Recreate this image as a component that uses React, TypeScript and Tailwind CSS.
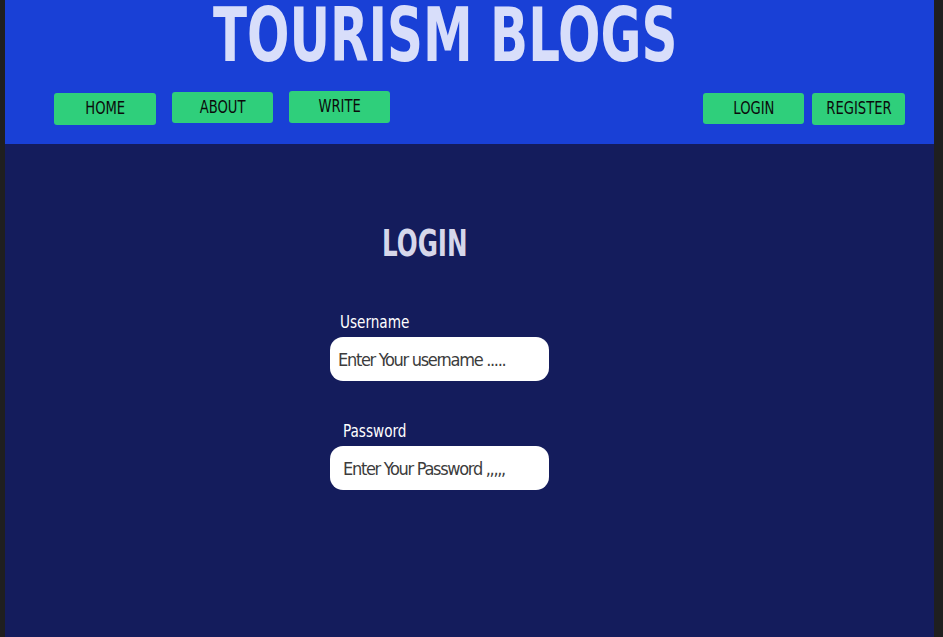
import React from "react";

const font = { fontFamily: '"DejaVu Sans Condensed", "DejaVu Sans", sans-serif' };

function NavButton({ label, size = "h-[32px] w-[101px]", className = "" }: { label: string; size?: string; className?: string }) {
  return (
    <button
      className={
        "flex items-center justify-center rounded-[3px] bg-[#2fcf7b] text-[17px] text-[#0b0b0b] " +
        size +
        " " +
        className
      }
    >
      <span className="inline-block scale-x-[0.86]">{label}</span>
    </button>
  );
}

function Field({ label, placeholder, labelPad, inputPad }: { label: string; placeholder: string; labelPad: string; inputPad: string }) {
  return (
    <div className="flex flex-col">
      <label className={"text-[18px] leading-[24px] text-white " + labelPad}>
        <span className="inline-block origin-left scale-x-[0.84]">{label}</span>
      </label>
      <input
        type="text"
        placeholder={placeholder}
        className={
          "mt-[3px] h-[44px] w-[219px] rounded-[13px] bg-white text-[18px] font-light tracking-[-1.3px] text-black outline-none placeholder:text-[#3c3c3c] " +
          inputPad
        }
      />
    </div>
  );
}

export default function App() {
  return (
    <div className="flex h-[637px] w-[943px] bg-[#1f1f1f] pl-[5px] pr-[9px]" style={font}>
      <div className="flex flex-1 flex-col bg-[#141c5c]">
        {/* Header */}
        <header className="flex h-[144px] flex-col bg-[#1940d6]">
          <h1 className="pl-[208px] pt-[1px] text-[74px] font-bold leading-[68px] whitespace-nowrap text-[#d8defa]">
            <span className="inline-block origin-left scale-x-[0.75]">TOURISM BLOGS</span>
          </h1>
          <nav className="mt-[22px] flex items-start justify-between pl-[49px] pr-[29px]">
            <div className="flex items-start gap-[16px]">
              <NavButton label="HOME" size="h-[32px] w-[102px]" className="mt-[2px]" />
              <NavButton label="ABOUT" size="h-[31px] w-[101px]" className="mt-[1px]" />
              <NavButton label="WRITE" />
            </div>
            <div className="flex items-start gap-[8px]">
              <NavButton label="LOGIN" size="h-[31px] w-[101px]" className="mt-[2px]" />
              <NavButton label="REGISTER" size="h-[32px] w-[93px]" className="mt-[2px]" />
            </div>
          </nav>
        </header>

        {/* Login form */}
        <main className="flex flex-col pl-[325px] pt-[76px]">
          <h2 className="pl-[52px] text-[38px] font-bold leading-[46px] whitespace-nowrap text-[#d6d7ea]">
            <span className="inline-block origin-left scale-x-[0.72]">LOGIN</span>
          </h2>
          <div className="mt-[44px] flex flex-col gap-[38px]">
            <Field label="Username" placeholder="Enter Your username ....." labelPad="pl-[10px]" inputPad="pl-[8px]" />
            <Field label="Password" placeholder="Enter Your Password ,,,,," labelPad="pl-[13px]" inputPad="pl-[13px]" />
          </div>
        </main>
      </div>
    </div>
  );
}
